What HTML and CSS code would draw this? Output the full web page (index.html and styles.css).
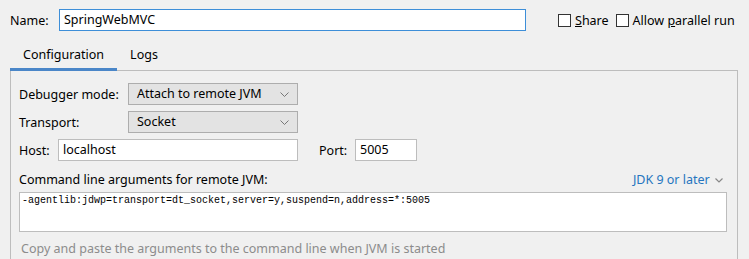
FILE: index.html
```html
<!DOCTYPE html>
<html lang="en">
<head>
    <meta charset="UTF-8">
    <title>Run Configuration</title>
    <link rel="stylesheet" href="styles.css">
</head>
<body>
    <div class="top-row">
        <label class="name-label">Name:</label>
        <div class="name-input">SpringWebMVC</div>
        <div class="checks">
            <span class="check"><span class="box"></span><span><u>S</u>hare</span></span>
            <span class="check"><span class="box"></span><span>Allow <u>p</u>arallel run</span></span>
        </div>
    </div>

    <div class="tabs">
        <div class="tab active">Configuration</div>
        <div class="tab">Logs</div>
    </div>

    <div class="panel">
        <div class="row">
            <span class="label">Debugger mode:</span>
            <div class="combo">Attach to remote JVM
                <svg class="chev" width="9" height="5" viewBox="0 0 9 5"><path d="M0.5 0.5 L4.5 4.5 L8.5 0.5" fill="none" stroke="#777" stroke-width="1"/></svg>
            </div>
        </div>
        <div class="row">
            <span class="label">Transport:</span>
            <div class="combo">Socket
                <svg class="chev" width="9" height="5" viewBox="0 0 9 5"><path d="M0.5 0.5 L4.5 4.5 L8.5 0.5" fill="none" stroke="#777" stroke-width="1"/></svg>
            </div>
        </div>
        <div class="row">
            <span class="host-label">Host:</span>
            <div class="field host">localhost</div>
            <span class="port-label">Port:</span>
            <div class="field port">5005</div>
        </div>

        <div class="cmd-head">
            <span>Command line arguments for remote JVM:</span>
            <span class="jdk">JDK 9 or later
                <svg width="8" height="5" viewBox="0 0 8 5"><path d="M0.5 0.5 L4 4 L7.5 0.5" fill="none" stroke="#888" stroke-width="1.2"/></svg>
            </span>
        </div>
        <div class="args">-agentlib:jdwp=transport=dt_socket,server=y,suspend=n,address=*:5005</div>
        <p class="hint">Copy and paste the arguments to the command line when JVM is started</p>
    </div>
</body>
</html>
```

FILE: styles.css
```css
/* General Styles */
body {
    margin: 0;
    background-color: #f0f0f0;
    font-family: "Noto Sans", sans-serif;
    font-size: 12.5px;
    color: #000;
    overflow: hidden;
}
.top-row {
    display: flex;
    align-items: center;
    height: 22px;
    padding: 9px 0 0 10px;
}
.name-label {
    width: 49px;
}
.name-input {
    width: 461px;
    height: 20px;
    line-height: 20px;
    padding-left: 4px;
    background: white;
    border: 1px solid #3d8ed8;
}
.checks {
    display: flex;
    margin-left: 32px;
    gap: 7px;
}
.check {
    display: flex;
    align-items: center;
}
.check .box {
    width: 11px;
    height: 11px;
    border: 1px solid #333;
    background: white;
    margin-right: 4px;
}
.tabs {
    display: flex;
    margin: 11px 0 0 10px;
    height: 29px;
}
.tab {
    padding: 0 13px;
    line-height: 26px;
}
.tab.active {
    border-bottom: 3px solid #4a86c8;
}
.panel {
    margin: -1px 0 0 10px;
    width: 718px;
    height: 176px;
    border: 1px solid #bdbdbd;
    border-bottom: none;
    padding: 12px 0 0 8px;
}
.row {
    display: flex;
    align-items: center;
    height: 22px;
    margin-bottom: 6px;
}
.label {
    width: 109px;
}
.combo {
    position: relative;
    width: 160px;
    height: 20px;
    line-height: 20px;
    padding-left: 8px;
    background: #e3e3e3;
    border: 1px solid #adadad;
}
.chev {
    position: absolute;
    right: 8px;
    top: 8px;
}
.host-label {
    width: 39px;
}
.field {
    height: 20px;
    line-height: 20px;
    padding-left: 4px;
    background: white;
    border: 1px solid #bdbdbd;
}
.host {
    width: 234px;
}
.port-label {
    margin-left: 21px;
    width: 36px;
}
.port {
    width: 56px;
}
.cmd-head {
    display: flex;
    justify-content: space-between;
    align-items: center;
    width: 704px;
    margin-top: 10px;
    height: 16px;
}
.jdk {
    color: #2675bf;
}
.jdk svg {
    margin-left: 2px;
    vertical-align: middle;
}
.args {
    margin-top: 5px;
    width: 704px;
    height: 38px;
    padding-left: 2px;
    background: white;
    border: 1px solid #bdbdbd;
    font-family: "Liberation Mono", monospace;
    font-size: 10px;
    line-height: 16px;
}
.hint {
    margin: 8px 0 0 2px;
    color: #8c8c8c;
}
```
